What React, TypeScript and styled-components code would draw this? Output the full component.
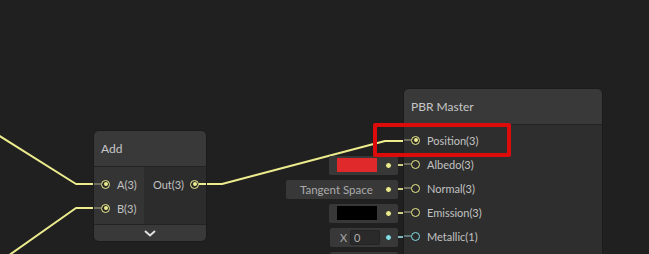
import React from 'react';
import styled, { createGlobalStyle } from 'styled-components';

const Global = createGlobalStyle`
  html, body { margin: 0; padding: 0; background: #202020; }
  body { font-family: Lato, "Noto Sans", sans-serif; -webkit-font-smoothing: antialiased; }
  #root { width: 649px; height: 254px; }
`;

const YELLOW = '#ecec8e';
const CYAN = '#84dde3';

const Canvas = styled.div`
  position: relative;
  width: 649px;
  height: 254px;
  overflow: hidden;
  background: #202020;
`;

const Wires = styled.svg`
  position: absolute;
  left: 0;
  top: 0;
`;

const Node = styled.div<{ $x: number; $y: number; $w: number }>`
  position: absolute;
  left: ${(p) => p.$x}px;
  top: ${(p) => p.$y}px;
  width: ${(p) => p.$w}px;
  box-sizing: border-box;
  border: 1px solid #1b1b1b;
  border-radius: 6px;
  overflow: hidden;
  background: #2e2e2e;
`;

const Title = styled.div`
  height: 36px;
  box-sizing: border-box;
  padding-left: 7px;
  display: flex;
  align-items: center;
  background: #393939;
  border-bottom: 1px solid #232323;
  color: #c6c6c6;
  font-size: 12px;
`;

const AddBody = styled.div`
  display: grid;
  grid-template-columns: 50px 1fr;
  height: 57px;
`;

const InputCol = styled.div`
  background: #343434;
  padding-top: 5px;
`;

const OutputCol = styled.div`
  background: #2c2c2c;
  padding-top: 5px;
`;

const PortRow = styled.div<{ $out?: boolean }>`
  height: 24px;
  display: flex;
  align-items: center;
  justify-content: ${(p) => (p.$out ? 'flex-end' : 'flex-start')};
  color: #c2c2c2;
  font-size: 11px;
`;

const Stub = styled.span<{ $color: string; $w: number }>`
  width: ${(p) => p.$w}px;
  height: 2px;
  background: ${(p) => p.$color};
  flex: none;
`;

const Port = styled.span<{ $color: string; $connected?: boolean }>`
  position: relative;
  width: 9px;
  height: 9px;
  box-sizing: border-box;
  border-radius: 50%;
  border: 1.5px solid ${(p) => p.$color};
  background: #2a2a2a;
  flex: none;
  &::after {
    content: '';
    display: ${(p) => (p.$connected ? 'block' : 'none')};
    position: absolute;
    left: 50%;
    top: 50%;
    width: 4px;
    height: 4px;
    margin: -2px 0 0 -2px;
    border-radius: 50%;
    background: ${(p) => p.$color};
  }
`;

const Label = styled.span<{ $gap: number; $side: 'left' | 'right' }>`
  ${(p) => (p.$side === 'left' ? `margin-left: ${p.$gap}px;` : `margin-right: ${p.$gap}px;`)}
  white-space: nowrap;
`;

const Footer = styled.div`
  height: 16px;
  border-top: 1px solid #232323;
  background: #393939;
  display: flex;
  align-items: center;
  justify-content: center;
`;

const MasterGroup = styled.div`
  position: absolute;
  left: 286px;
  top: 88px;
  display: flex;
  align-items: flex-start;
`;

const FieldCol = styled.div`
  width: 117px;
  padding-top: 41px;
  display: flex;
  flex-direction: column;
`;

const FieldRow = styled.div`
  height: 24px;
  display: flex;
  align-items: center;
  justify-content: flex-end;
`;

const FieldBox = styled.div<{ $w: number; $pl: number }>`
  width: ${(p) => p.$w}px;
  height: 19px;
  box-sizing: border-box;
  padding-left: ${(p) => p.$pl}px;
  padding-right: 6px;
  display: flex;
  align-items: center;
  background: #383838;
  border-radius: 2px;
  color: #ababab;
  font-size: 11.5px;
`;

const Swatch = styled.span<{ $color: string }>`
  width: 40px;
  height: 14px;
  background: ${(p) => p.$color};
`;

const AxisLabel = styled.span`
  width: 10px;
  font-size: 11px;
  color: #a8a8a8;
`;

const NumInput = styled.span`
  width: 30px;
  height: 15px;
  box-sizing: border-box;
  background: #2a2a2a;
  border: 1px solid #232323;
  border-radius: 2px;
  padding-left: 3px;
  font-size: 11px;
  line-height: 13px;
  color: #b0b0b0;
`;

const SmallDot = styled.span<{ $color: string }>`
  margin-left: auto;
  width: 7px;
  height: 7px;
  box-sizing: border-box;
  border-radius: 50%;
  background: ${(p) => p.$color};
  border: 1.5px solid #262626;
  flex: none;
`;

const MasterBody = styled.div`
  padding-top: 3px;
  height: 140px;
`;

const Highlight = styled.div`
  position: absolute;
  left: 373px;
  top: 123px;
  width: 138px;
  height: 34px;
  box-sizing: border-box;
  border: 4px solid #de0b0b;
  border-radius: 2px;
`;

type Field =
  | { kind: 'none' }
  | { kind: 'color'; color: string }
  | { kind: 'text'; text: string }
  | { kind: 'num'; value: string }
  | { kind: 'blank' };

const masterPorts: { label: string; color: string; connected?: boolean; field: Field }[] = [
  { label: 'Position(3)', color: YELLOW, connected: true, field: { kind: 'none' } },
  { label: 'Albedo(3)', color: YELLOW, field: { kind: 'color', color: '#e0292b' } },
  { label: 'Normal(3)', color: YELLOW, field: { kind: 'text', text: 'Tangent Space' } },
  { label: 'Emission(3)', color: YELLOW, field: { kind: 'color', color: '#000000' } },
  { label: 'Metallic(1)', color: CYAN, field: { kind: 'num', value: '0' } },
];

const fields: { key: string; color: string; field: Field }[] = [
  ...masterPorts.map((p) => ({ key: p.label, color: p.color, field: p.field })),
  { key: 'next', color: CYAN, field: { kind: 'blank' } },
];

function renderField(f: Field, color: string) {
  if (f.kind === 'none') return null;
  const dim = color === CYAN ? '#7fb9bd' : '#cfcf86';
  let box: React.ReactNode;
  if (f.kind === 'color') {
    box = (
      <FieldBox $w={69} $pl={8}>
        <Swatch $color={f.color} />
        <SmallDot $color={color} />
      </FieldBox>
    );
  } else if (f.kind === 'text') {
    box = (
      <FieldBox $w={112} $pl={14}>
        <span>{f.text}</span>
        <SmallDot $color={color} />
      </FieldBox>
    );
  } else if (f.kind === 'num') {
    box = (
      <FieldBox $w={68} $pl={10}>
        <AxisLabel>X</AxisLabel>
        <NumInput>{f.value}</NumInput>
        <SmallDot $color={color} />
      </FieldBox>
    );
  } else {
    box = <FieldBox $w={68} $pl={10} />;
  }
  return (
    <>
      {box}
      <Stub $color={dim} $w={5} />
    </>
  );
}

export default function App() {
  return (
    <>
      <Global />
      <Canvas>
        <Wires width={649} height={254} viewBox="0 0 649 254">
          <g fill="none" stroke={YELLOW} strokeWidth={2} strokeLinejoin="round">
            <polyline points="-2,135 76,184 95,184" />
            <polyline points="-2,263 76,208 95,208" />
            <polyline points="200,184 222,184 385,141 405,141" />
          </g>
        </Wires>

        <Node $x={93} $y={130} $w={114}>
          <Title>Add</Title>
          <AddBody>
            <InputCol>
              <PortRow>
                <Stub $color="#6e6e5e" $w={7} />
                <Port $color={YELLOW} $connected />
                <Label $side="left" $gap={7}>A(3)</Label>
              </PortRow>
              <PortRow>
                <Stub $color="#6e6e5e" $w={7} />
                <Port $color={YELLOW} $connected />
                <Label $side="left" $gap={7}>B(3)</Label>
              </PortRow>
            </InputCol>
            <OutputCol>
              <PortRow $out>
                <Label $side="right" $gap={6}>Out(3)</Label>
                <Port $color={YELLOW} $connected />
                <Stub $color={YELLOW} $w={7} />
              </PortRow>
            </OutputCol>
          </AddBody>
          <Footer>
            <svg width="12" height="7" viewBox="0 0 12 7">
              <polyline points="1,1 6,5.5 11,1" fill="none" stroke="#e0e0e0" strokeWidth="2" />
            </svg>
          </Footer>
        </Node>

        <MasterGroup>
          <FieldCol>
            {fields.map((f) => (
              <FieldRow key={f.key}>{renderField(f.field, f.color)}</FieldRow>
            ))}
          </FieldCol>
          <Node $x={0} $y={0} $w={200} style={{ position: 'relative' }}>
            <Title>PBR Master</Title>
            <MasterBody>
              {masterPorts.map((p) => (
                <PortRow key={p.label}>
                  <Stub $color={p.color === CYAN ? '#5f7779' : '#6e6e5e'} $w={7} />
                  <Port $color={p.color} $connected={p.connected} />
                  <Label $side="left" $gap={7}>{p.label}</Label>
                </PortRow>
              ))}
            </MasterBody>
          </Node>
        </MasterGroup>

        <Highlight />
      </Canvas>
    </>
  );
}
